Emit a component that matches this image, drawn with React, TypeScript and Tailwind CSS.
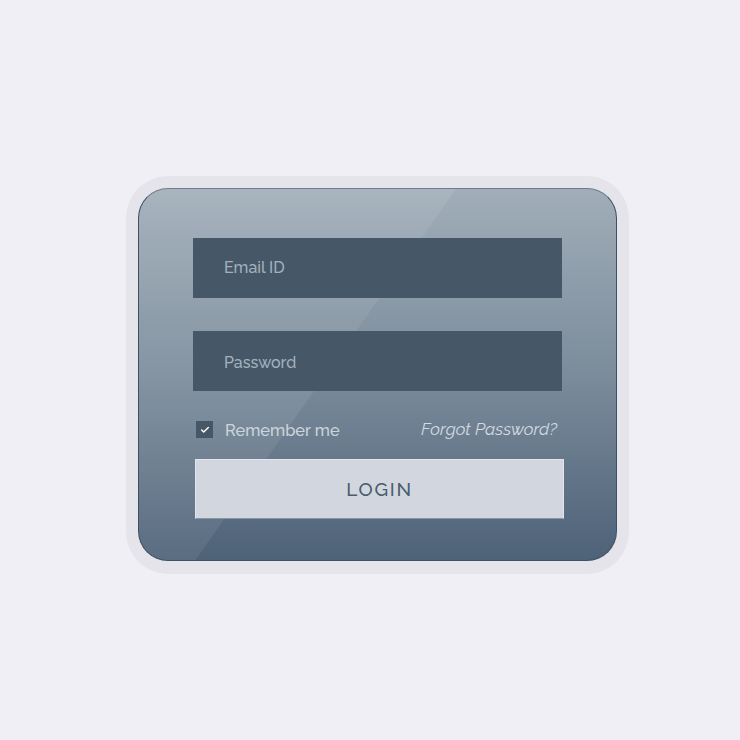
import { Check } from 'lucide-react';

const font = { fontFamily: 'Raleway, Lato, "Open Sans", sans-serif' };

export default function App() {
  return (
    <main className="w-[740px] h-[740px] bg-[#f0eff5] flex items-center justify-center" style={font}>
      {/* Outer frame */}
      <div className="px-[12px] pt-[12px] pb-[13px] rounded-[42px] bg-[#e5e4eb] mt-[10px] ml-[15px]">
        {/* Card */}
        <div className="relative w-[479px] h-[373px] rounded-[30px] border border-[#3e4f62] border-t-[#6d7c8a] overflow-hidden bg-gradient-to-b from-[#a1aeb9] via-[#7b8c9b] to-[#4e6278] px-[54px] pt-[49px]">
          {/* gloss */}
          <div className="absolute inset-0 bg-white/[0.07] [clip-path:polygon(0_0,317px_0,55px_373px,0_373px)] pointer-events-none" />

          <div className="relative flex flex-col">
            <div className="h-[60px] bg-[#465868] flex items-center pl-[31px] text-[16px] font-medium text-[#a3b1bd]">
              Email ID
            </div>
            <div className="h-[60px] mt-[33px] bg-[#465868] flex items-center pl-[31px] pt-[3px] text-[16px] font-medium text-[#a3b1bd]">
              Password
            </div>

            <div className="mt-[30px] flex items-center justify-between pl-[3px] pr-[5px] h-[17px]">
              <div className="flex items-center gap-[12px]">
                <span className="w-[17px] h-[17px] bg-[#465868] flex items-center justify-center">
                  <Check size={10} strokeWidth={3.5} className="text-white" />
                </span>
                <span className="text-[16.4px] font-medium text-[#cdd5dc] pt-[3px]">Remember me</span>
              </div>
              <span className="text-[17px] italic text-[#d3dae1]">Forgot Password?</span>
            </div>

            <button className="mt-[21px] ml-[2px] h-[60px] w-[369px] bg-[#d2d7df] border border-[#e2e6ec] border-b-[#8796a5] flex items-center justify-center text-[19px] font-medium tracking-[0.09em] text-[#4a5c6e]">
              LOGIN
            </button>
          </div>
        </div>
      </div>
    </main>
  );
}
